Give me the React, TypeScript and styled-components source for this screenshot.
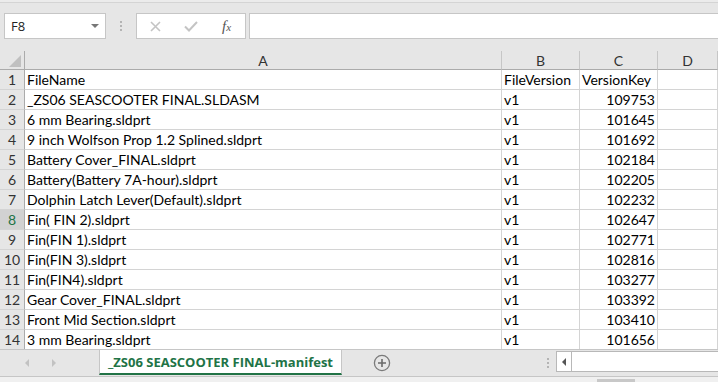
import React from 'react';
import styled, { createGlobalStyle } from 'styled-components';

const GlobalStyle = createGlobalStyle`
    html, body {
        margin: 0;
        padding: 0;
        background: #ffffff;
        overflow: hidden;
    }
    * {
        box-sizing: border-box;
    }
`;

const rows = [
    ['FileName', 'FileVersion', 'VersionKey'],
    ['_ZS06 SEASCOOTER FINAL.SLDASM', 'v1', '109753'],
    ['6 mm Bearing.sldprt', 'v1', '101645'],
    ['9 inch Wolfson Prop 1.2 Splined.sldprt', 'v1', '101692'],
    ['Battery Cover_FINAL.sldprt', 'v1', '102184'],
    ['Battery(Battery 7A-hour).sldprt', 'v1', '102205'],
    ['Dolphin Latch Lever(Default).sldprt', 'v1', '102232'],
    ['Fin( FIN 2).sldprt', 'v1', '102647'],
    ['Fin(FIN 1).sldprt', 'v1', '102771'],
    ['Fin(FIN 3).sldprt', 'v1', '102816'],
    ['Fin(FIN4).sldprt', 'v1', '103277'],
    ['Gear Cover_FINAL.sldprt', 'v1', '103392'],
    ['Front Mid Section.sldprt', 'v1', '103410'],
    ['3 mm Bearing.sldprt', 'v1', '101656'],
];

const Page = styled.div`
    width: 718px;
    height: 382px;
    display: flex;
    flex-direction: column;
    overflow: hidden;
    background: #ebebeb;
    font-family: Lato, 'Liberation Sans', sans-serif;
`;

const FormulaBar = styled.div`
    height: 49px;
    flex: none;
    background: #e6e6e6;
    border-top: 1px solid #d4d4d4;
    margin-top: 2px;
    display: flex;
    align-items: flex-start;
    padding: 10px 0 0 4px;
`;

const NameBox = styled.div`
    width: 102px;
    height: 26px;
    background: #ffffff;
    border: 1px solid #c6c6c6;
    display: flex;
    align-items: center;
    justify-content: space-between;
    padding: 0 6px 0 6px;
    font-family: 'Open Sans', 'Liberation Sans', sans-serif;
    font-size: 13px;
    color: #222;
`;

const DropArrow = styled.span`
    width: 0;
    height: 0;
    border-left: 4px solid transparent;
    border-right: 4px solid transparent;
    border-top: 4px solid #777;
`;

const Grip = styled.div`
    width: 30px;
    height: 26px;
    display: flex;
    flex-direction: column;
    align-items: center;
    justify-content: center;
    gap: 2px;
    & > span {
        width: 2px;
        height: 2px;
        background: #b4b4b4;
    }
`;

const FxBox = styled.div`
    width: 110px;
    height: 26px;
    background: #ffffff;
    border: 1px solid #c6c6c6;
    display: flex;
    align-items: center;
    padding-left: 12px;
    gap: 22px;
`;

const FxLabel = styled.span`
    font-family: 'Liberation Serif', serif;
    font-style: italic;
    font-size: 15px;
    color: #555;
    margin-left: 2px;
    & > sub {
        font-size: 11px;
        vertical-align: 0;
    }
`;

const FormulaInput = styled.div`
    flex: 1;
    height: 26px;
    margin-left: 3px;
    background: #ffffff;
    border: 1px solid #c6c6c6;
    border-right: none;
`;

const Sheet = styled.div`
    flex: 1;
    overflow: hidden;
    display: grid;
    grid-template-columns: 25px 477px 78px 78px 1fr;
    grid-auto-rows: 20px;
    grid-template-rows: 19px;
    font-size: 14px;
    color: #000;
    background: #fff;
`;

const Corner = styled.div`
    background: #e6e6e6;
    border-right: 1px solid #ababab;
    border-bottom: 1px solid #ababab;
    position: relative;
    &::after {
        content: '';
        position: absolute;
        right: 3px;
        bottom: 2px;
        width: 0;
        height: 0;
        border-left: 12px solid transparent;
        border-bottom: 12px solid #c0c0c0;
    }
`;

const ColHead = styled.div`
    background: #e6e6e6;
    border-right: 1px solid #c6c6c6;
    border-bottom: 1px solid #ababab;
    display: flex;
    align-items: center;
    justify-content: center;
    color: #333;
    padding-top: 1px;
`;

const RowHead = styled.div<{ $active?: boolean }>`
    background: ${p => (p.$active ? '#d2d2d2' : '#e6e6e6')};
    color: ${p => (p.$active ? '#217346' : '#333')};
    border-right: 1px solid #ababab;
    border-bottom: 1px solid #d4d4d4;
    display: flex;
    align-items: center;
    justify-content: center;
`;

const Cell = styled.div<{ $num?: boolean }>`
    border-right: 1px solid #d4d4d4;
    border-bottom: 1px solid #d4d4d4;
    display: flex;
    align-items: center;
    justify-content: ${p => (p.$num ? 'flex-end' : 'flex-start')};
    padding: 0 2px;
    white-space: nowrap;
    overflow: hidden;
`;

const TabBar = styled.div`
    height: 28px;
    flex: none;
    background: #e6e6e6;
    border-top: 1px solid #c6c6c6;
    border-bottom: 1px solid #c6c6c6;
    display: flex;
    align-items: flex-start;
`;

const NavArrows = styled.div`
    width: 99px;
    height: 26px;
    display: flex;
    align-items: center;
    padding-left: 25px;
    gap: 23px;
`;

const Arrow = styled.span<{ $dir: 'left' | 'right'; $color?: string }>`
    width: 0;
    height: 0;
    border-top: 4px solid transparent;
    border-bottom: 4px solid transparent;
    ${p => (p.$dir === 'left' ? 'border-right' : 'border-left')}: 4px solid ${p => p.$color || '#c2c2c2'};
`;

const SheetTab = styled.div`
    width: 243px;
    height: 25px;
    background: #ffffff;
    border-left: 1px solid #c6c6c6;
    border-right: 1px solid #c6c6c6;
    border-bottom: 2px solid #217346;
    display: flex;
    align-items: center;
    justify-content: center;
    font-family: 'Open Sans', 'Liberation Sans', sans-serif;
    font-weight: 700;
    font-size: 13px;
    color: #217346;
    padding-top: 1px;
`;

const AddSheet = styled.div`
    width: 80px;
    height: 26px;
    display: flex;
    align-items: center;
    padding-left: 31px;
`;

const Spacer = styled.div`
    flex: 1;
`;

const TabGrip = styled(Grip)`
    width: 16px;
    height: 26px;
`;

const HScroll = styled.div`
    width: 162px;
    height: 21px;
    margin-top: 1px;
    background: #ffffff;
    border: 1px solid #b8b8b8;
    border-right: none;
    display: flex;
`;

const ScrollBtn = styled.div`
    width: 15px;
    border-right: 1px solid #b8b8b8;
    display: flex;
    align-items: center;
    justify-content: center;
`;

const BottomStrip = styled.div`
    height: 5px;
    flex: none;
    background: #f0f0f0;
    padding: 2px 0 0 597px;
`;

const Thumb = styled.div`
    width: 38px;
    height: 3px;
    background: #c8c8c8;
`;

export default function App() {
    return (
        <Page>
            <GlobalStyle />
            <FormulaBar>
                <NameBox>
                    F8
                    <DropArrow />
                </NameBox>
                <Grip>
                    <span />
                    <span />
                    <span />
                </Grip>
                <FxBox>
                    <svg width="13" height="11" viewBox="0 0 13 11">
                        <path d="M2 1 L11 10 M11 1 L2 10" stroke="#c4c4c4" strokeWidth="1.6" fill="none" />
                    </svg>
                    <svg width="14" height="11" viewBox="0 0 14 11">
                        <path d="M1 5.5 L5 9.5 L13 1" stroke="#c4c4c4" strokeWidth="2" fill="none" />
                    </svg>
                    <FxLabel>
                        f<sub>x</sub>
                    </FxLabel>
                </FxBox>
                <FormulaInput />
            </FormulaBar>

            <Sheet>
                <Corner />
                <ColHead>A</ColHead>
                <ColHead>B</ColHead>
                <ColHead>C</ColHead>
                <ColHead>D</ColHead>
                {rows.map((r, i) => (
                    <React.Fragment key={i}>
                        <RowHead $active={i === 7}>{i + 1}</RowHead>
                        <Cell>{r[0]}</Cell>
                        <Cell>{r[1]}</Cell>
                        <Cell $num={i > 0}>{r[2]}</Cell>
                        <Cell />
                    </React.Fragment>
                ))}
                <RowHead />
                <Cell />
                <Cell />
                <Cell />
                <Cell />
            </Sheet>

            <TabBar>
                <NavArrows>
                    <Arrow $dir="left" />
                    <Arrow $dir="right" />
                </NavArrows>
                <SheetTab>_ZS06 SEASCOOTER FINAL-manifest</SheetTab>
                <AddSheet>
                    <svg width="18" height="18" viewBox="0 0 18 18">
                        <circle cx="9" cy="9" r="7.6" stroke="#7a7a7a" strokeWidth="1.3" fill="none" />
                        <path d="M9 5 V13 M5 9 H13" stroke="#6a6a6a" strokeWidth="1.6" />
                    </svg>
                </AddSheet>
                <Spacer />
                <TabGrip>
                    <span />
                    <span />
                    <span />
                </TabGrip>
                <HScroll>
                    <ScrollBtn>
                        <Arrow $dir="left" $color="#555" />
                    </ScrollBtn>
                </HScroll>
            </TabBar>
            <BottomStrip>
                <Thumb />
            </BottomStrip>
        </Page>
    );
}
